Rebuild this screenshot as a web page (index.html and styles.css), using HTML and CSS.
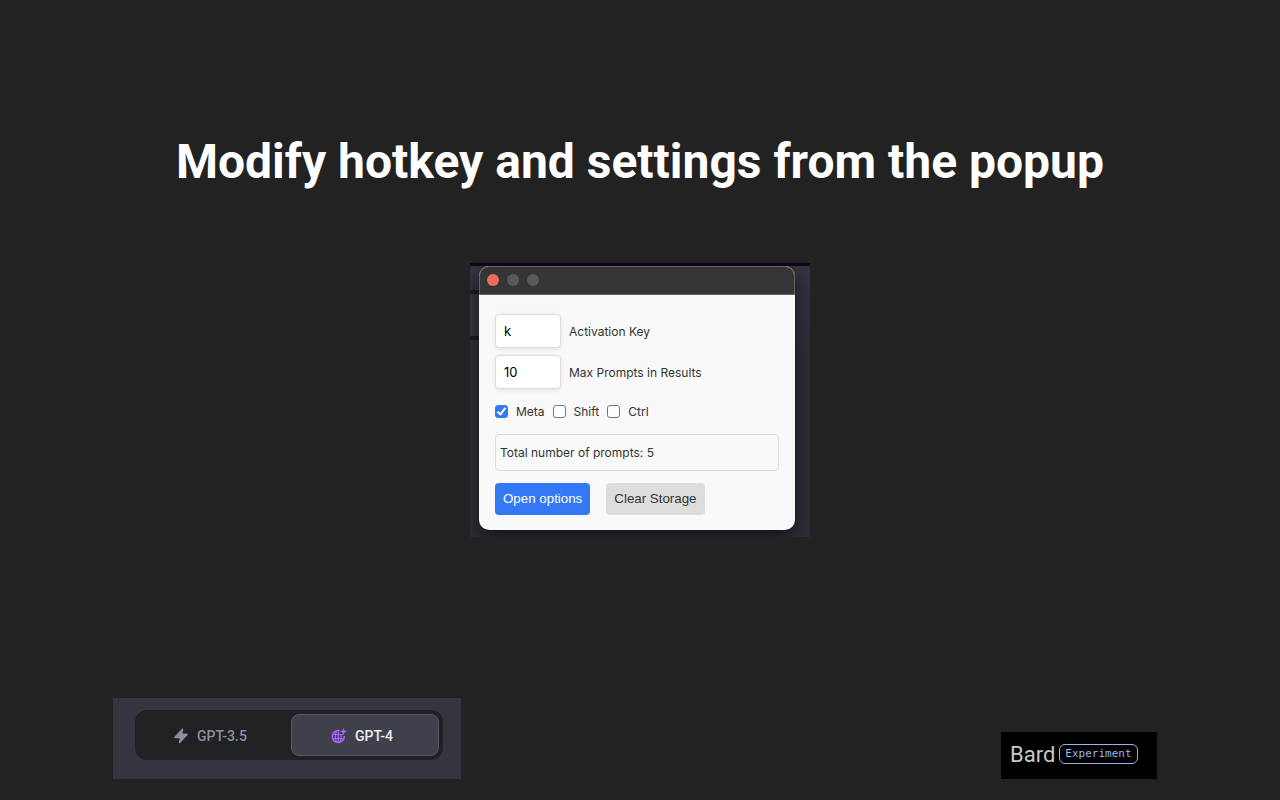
FILE: index.html
```html
<!DOCTYPE html>
<html lang="en">
<head>
  <meta charset="UTF-8">
  <title>Modify hotkey and settings from the popup</title>
  <link rel="stylesheet" href="styles.css">
</head>
<body>

  <h1>Modify hotkey and settings from the popup</h1>

  <main class="shot">
    <div class="window">
      <div class="titlebar">
        <span class="dot close"></span>
        <span class="dot"></span>
        <span class="dot"></span>
      </div>
      <form class="settings">
        <div class="field">
          <input type="text" id="hotkey" value="k">
          <label for="hotkey">Activation Key</label>
        </div>
        <div class="field">
          <input type="text" id="maxPrompts" value="10">
          <label for="maxPrompts">Max Prompts in Results</label>
        </div>
        <div class="modifiers">
          <input type="checkbox" id="meta" checked>
          <label for="meta">Meta</label>
          <input type="checkbox" id="shift">
          <label for="shift">Shift</label>
          <input type="checkbox" id="ctrl">
          <label for="ctrl">Ctrl</label>
        </div>
        <p class="total">Total number of prompts: 5</p>
        <div class="buttons">
          <button type="button" class="primary">Open options</button>
          <button type="button">Clear Storage</button>
        </div>
      </form>
    </div>
  </main>

  <footer>
    <div class="gpt">
      <div class="switch">
        <button type="button" class="model">
          <svg width="16" height="16" viewBox="0 0 16 16" fill="currentColor"><path d="M9 .8c.6-.6 1.4-.2 1.2.6L9.3 5.5h4.4c1 0 1.4.9.8 1.6l-7.3 8c-.6.6-1.5.2-1.3-.6L6.7 10.3H2.3c-1 0-1.4-.9-.8-1.6z"/></svg>
          GPT-3.5
        </button>
        <button type="button" class="model active">
          <svg width="16" height="16" viewBox="0 0 16 16" fill="none" stroke="currentColor" stroke-width="1.5">
            <path d="M8.5 2.6A6 6 0 1 0 13.3 8"/>
            <path d="M2 6.5h10M1.5 10.5h11.5M5.500 3C4.2 6 4.2 11 5.6 14M9 14c1.3-2.5 1.4-5 1-7.5M7.3 2.5v12" stroke-width="1.2"/>
            <path d="M12.5 0l1 2.5 2.5 1-2.5 1-1 2.5-1-2.5-2.5-1 2.5-1z" fill="currentColor"/>
          </svg>
          GPT-4
        </button>
      </div>
    </div>
    <div class="bard">
      <span class="bard-name">Bard</span>
      <span class="bard-tag">Experiment</span>
    </div>
  </footer>

</body>
</html>
```

FILE: styles.css
```css
* { box-sizing: border-box; }
body {
  margin: 0;
  min-height: 100vh;
  display: grid;
  grid-template-rows: 1fr auto 1fr;
  justify-items: center;
  background: #222;
  font-family: Inter, sans-serif;
}
h1 {
  align-self: end;
  margin: 0 20px 71px;
  font-family: Roboto, sans-serif;
  font-size: 48px;
  line-height: 60px;
  text-align: center;
  color: #fff;
}

/* popup window */
.shot {
  width: 340px;
  padding: 3px 15px 7px 9px;
  background:
    linear-gradient(transparent 27px, #1b1b1f 27px, #1b1b1f 31px, #363641 31px, #363641 73px, #1b1b1f 73px, #1b1b1f 77px, transparent 77px) 0 0 / 20px 100% no-repeat,
    linear-gradient(#12051a 3px, #33333f 3px, #2d2d38 90px);
  overflow: hidden;
}
.window {
  border-radius: 10px;
  background: #f9f9f9;
  box-shadow: 0 0 1px #000, 0 10px 18px rgba(0, 0, 0, 0.5);
}
.titlebar {
  display: flex;
  align-items: center;
  gap: 8px;
  height: 29px;
  padding: 0 7px 1px;
  background: #353535;
  border: 1px solid #666;
  border-radius: 10px 10px 0 0;
}
.dot {
  width: 12px;
  height: 12px;
  border-radius: 50%;
  background: #595959;
}
.close { background: #ed6a5e; }
.settings {
  padding: 19px 16px 15px;
  font-size: 12px;
  color: #333;
}
.field {
  display: flex;
  align-items: center;
  gap: 8px;
  margin-bottom: 7px;
}
.field input {
  width: 66px;
  height: 34px;
  padding: 7px 8px 8px;
  border: 1px solid #ddd;
  border-radius: 4px;
  background: #fff;
  box-shadow: 0 1px 4px rgba(0, 0, 0, 0.1);
  font-family: Inter, sans-serif;
  font-size: 13px;
  color: #000;
}
.modifiers {
  display: flex;
  align-items: center;
  gap: 8px;
  height: 15px;
  margin: 15px 0;
}
.modifiers input {
  appearance: none;
  width: 13px;
  height: 13px;
  margin: 0;
  border: 1px solid #767676;
  border-radius: 3px;
  background: #fff;
}
.modifiers input:checked {
  border-color: #3478f6;
  background: #3478f6;
}
.modifiers input:checked::before {
  content: "";
  display: block;
  box-sizing: border-box;
  width: 5px;
  height: 9px;
  margin: 0 auto;
  border: solid #fff;
  border-width: 0 2px 2px 0;
  transform: rotate(38deg);
}
.total {
  margin: 0 0 12px;
  padding: 10px 4px;
  border: 1px solid #ddd;
  border-radius: 4px;
  line-height: 15px;
}
.buttons {
  display: flex;
  gap: 16px;
}
.buttons button {
  height: 32px;
  padding: 0 8px 2px;
  border: none;
  border-radius: 4px;
  background: #ddd;
  color: #333;
}
.buttons .primary {
  background: #3478f6;
  color: #fff;
}

/* supported sites */
footer {
  display: flex;
  align-items: flex-end;
  justify-content: space-between;
  justify-self: stretch;
  padding: 0 123px 21px 113px;
}
.gpt {
  width: 348px;
  padding: 12px 18px 19px 22px;
  background: #353541;
}
.switch {
  display: flex;
  gap: 4px;
  padding: 4px;
  border-radius: 12px;
  background: #202123;
}
.model {
  flex: 1;
  display: flex;
  align-items: center;
  justify-content: center;
  gap: 8px;
  height: 42px;
  padding: 1px 6px 0 0;
  border: 1px solid transparent;
  border-radius: 8px;
  background: none;
  font-family: Roboto, sans-serif;
  font-size: 14px;
  font-weight: 500;
  color: #8e8ea0;
}
.model.active {
  border-color: #565666;
  background: #40404d;
  color: #ececf1;
}
.active svg { color: #a866ff; }
.active svg path:last-child { stroke: none; }
.bard {
  display: flex;
  align-items: center;
  gap: 4px;
  width: 156px;
  height: 47px;
  padding: 0 9px 3px;
  background: #000;
}
.bard-name {
  font-family: Roboto, sans-serif;
  font-size: 22px;
  color: #c8c8c8;
}
.bard-tag {
  padding: 0 5px;
  border: 1px solid #9ab4ee;
  border-radius: 6px;
  font-family: "DejaVu Sans Mono", monospace;
  font-size: 11px;
  line-height: 18px;
  color: #9ab4ee;
}
```
